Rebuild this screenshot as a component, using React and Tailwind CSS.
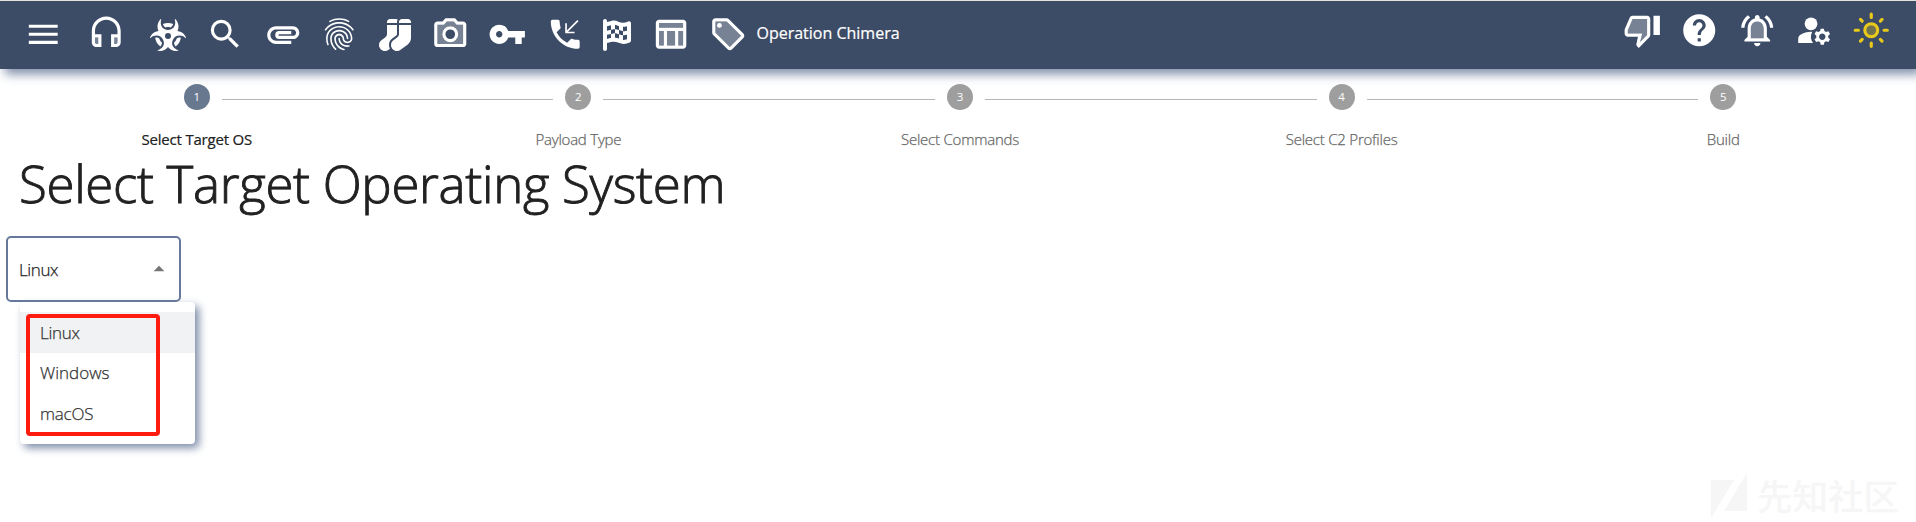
import React from "react";
import {
  MdMenu, MdSearch, MdAttachment, MdFingerprint, MdVpnKey, MdHelp, MdManageAccounts, MdArrowDropUp,
} from "react-icons/md";
import { FaBiohazard, FaSocks, FaFlagCheckered } from "react-icons/fa6";

const ICON = "block h-[38.5px] w-[38.5px] shrink-0";
const FA = "block h-8 w-9 shrink-0";

function TwoTone({ line, tone, children }) {
  return (
    <svg viewBox="0 0 24 24" fill="currentColor" className={ICON}>
      <path opacity=".3" fillRule="evenodd" d={tone} />
      {line && <path d={line} />}
      {children}
    </svg>
  );
}

const Headset = () => (
  <TwoTone
    tone="M5 14v3c0 .55.45 1 1 1h1v-4H5zM17 14v4h1c.55 0 1-.45 1-1v-3h-2z"
    line="M12 1c-4.97 0-9 4.03-9 9v7c0 1.66 1.34 3 3 3h3v-8H5v-2c0-3.87 3.13-7 7-7s7 3.13 7 7v2h-4v8h3c1.66 0 3-1.34 3-3v-7c0-4.97-4.03-9-9-9zM7 14v4H6c-.55 0-1-.45-1-1v-3h2zm12 3c0 .55-.45 1-1 1h-1v-4h2v3z"
  />
);
const Camera = () => (
  <TwoTone
    tone="M15.95 6l-1.83-2H9.88L8.05 6H4v12h16V6h-4.05zM12 17c-2.76 0-5-2.24-5-5s2.24-5 5-5 5 2.24 5 5-2.24 5-5 5z"
    line="M20 4h-3.17L15 2H9L7.17 4H4c-1.1 0-2 .9-2 2v12c0 1.1.9 2 2 2h16c1.1 0 2-.9 2-2V6c0-1.1-.9-2-2-2zm0 14H4V6h4.05l1.83-2h4.24l1.83 2H20v12z"
  >
    <circle cx="12" cy="12" r="4" fill="none" stroke="currentColor" strokeWidth="2" />
  </TwoTone>
);
const PhoneCallback = () => (
  <svg viewBox="0 0 24 24" fill="currentColor" className={ICON}>
    <path d="M20 15.5c-1.25 0-2.45-.2-3.57-.57-.35-.11-.74-.03-1.02.24l-2.2 2.2c-2.83-1.44-5.15-3.75-6.59-6.59l2.2-2.21c.28-.26.36-.65.25-1C8.7 6.45 8.5 5.25 8.5 4c0-.55-.45-1-1-1H4c-.55 0-1 .45-1 1 0 9.39 7.61 17 17 17 .55 0 1-.45 1-1v-3.500c0-.55-.45-1-1-1z" />
    <path d="M12.500 5.200v5.700h5.300M12.700 10.700l7.200-7.200" fill="none" stroke="currentColor" strokeWidth="1.050" />
  </svg>
);
const Table = () => (
  <TwoTone
    tone="M5 5h15v3H5zM10 10h5v9h-5zM5 10h3v9H5zM17 10h3v9h-3z"
    line="M20 3H5c-1.1 0-2 .9-2 2v14c0 1.1.9 2 2 2h15c1.1 0 2-.9 2-2V5c0-1.1-.9-2-2-2zm0 2v3H5V5h15zm-5 14h-5v-9h5v9zM5 10h3v9H5v-9zm12 9v-9h3v9h-3z"
  />
);
const Tag = () => (
  <TwoTone
    tone="M11 4H4v7l9 9.01L20 13l-9-9z"
    line="M21.41 11.58l-9-9C12.05 2.22 11.55 2 11 2H4c-1.1 0-2 .9-2 2v7c0 .55.22 1.05.59 1.42l9 9c.36.36.86.58 1.41.58s1.05-.22 1.41-.59l7-7c.37-.36.59-.86.59-1.41s-.23-1.06-.59-1.42zM13 20.01L4 11V4h7v-.01l9 9-7 7.02z"
  >
    <circle cx="6.5" cy="6.5" r="1.5" />
  </TwoTone>
);
const ThumbDown = () => (
  <TwoTone
    tone="M3 12v2h9l-1.34 5.34L15 15V5H6z"
    line="M15 3H6c-.83 0-1.54.5-1.84 1.22l-3.02 7.05c-.09.23-.14.47-.14.73v2c0 1.1.9 2 2 2h6.31l-.95 4.57-.03.32c0 .41.17.79.44 1.06L9.83 23l6.59-6.59c.36-.36.58-.86.58-1.41V5c0-1.1-.9-2-2-2zm0 12l-4.34 4.34L12 14H3v-2l3-7h9v10zm4-12h4v12h-4V3z"
  />
);
const Bell = () => (
  <TwoTone
    tone="M12 6.5c-2.49 0-4 2.02-4 4.5v6h8v-6c0-2.48-1.51-4.5-4-4.5z"
    line="M12 22c1.1 0 2-.9 2-2h-4c0 1.1.9 2 2 2zm6-6v-5c0-3.07-1.63-5.64-4.5-6.32V4c0-.83-.67-1.5-1.5-1.5s-1.5.67-1.5 1.5v.68C7.64 5.36 6 7.92 6 11v5l-2 2v1h16v-1l-2-2zm-2 1H8v-6c0-2.48 1.51-4.5 4-4.5s4 2.02 4 4.5v6zM7.58 4.08L6.15 2.65C3.75 4.48 2.17 7.3 2.03 10.5h2c.15-2.65 1.51-4.97 3.55-6.42zM19.97 10.5h2c-.15-3.2-1.73-6.02-4.12-7.85l-1.42 1.43c2.02 1.45 3.39 3.77 3.54 6.42z"
  />
);
const Sun = () => (
  <TwoTone tone="M12 9a3 3 0 1 0 0 6a3 3 0 1 0 0-6z">
    <circle cx="12" cy="12" r="4" fill="none" stroke="currentColor" strokeWidth="2" />
    <path
      fill="none" stroke="currentColor" strokeWidth="2" strokeLinecap="round"
      d="M12 2v2M12 20v2M2 12h2M20 12h2M5.28 5.28l1.06 1.06M17.66 17.66l1.06 1.06M5.28 18.72l1.06-1.06M17.66 6.34l1.06-1.06"
    />
  </TwoTone>
);

const LEFT = [
  ["ml-[24.7px]", <MdMenu className={ICON} />],
  ["ml-[25px]", <Headset />],
  ["ml-[23px]", <FaBiohazard className={FA} />],
  ["ml-[19.1px]", <MdSearch className={ICON} />],
  ["ml-[20px]", <MdAttachment className={ICON} />],
  ["ml-[18.9px]", <MdFingerprint className={ICON} />],
  ["ml-[17.6px]", <FaSocks className={FA} />],
  ["ml-[16.6px]", <Camera />],
  ["ml-[19.1px]", <MdVpnKey className={ICON} />],
  ["ml-[20px]", <PhoneCallback />],
  ["ml-[14px]", <FaFlagCheckered className={FA} />],
  ["ml-[15px]", <Table />],
  ["ml-[20px]", <Tag />],
];
const RIGHT = [
  ["text-white", <ThumbDown />],
  ["text-white", <MdHelp className={ICON} />],
  ["text-white", <Bell />],
  ["text-white", <MdManageAccounts className={ICON} />],
  ["text-[#e8c91b]", <Sun />],
];
const STEPS = ["Select Target OS", "Payload Type", "Select Commands", "Select C2 Profiles", "Build"];

function TopBar() {
  return (
    <header className="flex h-[68px] justify-between bg-[#3d4c66] text-white shadow-[5px_5px_10px_#7d8ca8]">
      <div className="flex h-[67px] items-center">
        {LEFT.map(([pos, icon], i) => (
          <button key={i} className={`flex w-[38px] shrink-0 justify-center ${pos}`}>{icon}</button>
        ))}
        <span className="mb-[3px] ml-[9.5px] whitespace-nowrap text-[16px] [-webkit-text-stroke:0.2px]">Operation Chimera</span>
      </div>
      <div className="flex h-[58px] items-center gap-[19.4px] pr-[25.4px]">
        {RIGHT.map(([tone, icon], i) => (
          <button key={i} className={`flex w-[38px] shrink-0 justify-center ${tone}`}>{icon}</button>
        ))}
      </div>
    </header>
  );
}

function Stepper() {
  return (
    <ol className="grid h-[80px] grid-cols-5 pl-[6px] pr-[2px] pt-[15px]">
      {STEPS.map((label, i) => (
        <li key={label} className="flex flex-col items-center">
          <div className="flex h-[26px] w-full items-start">
            <span className={`mt-[15px] h-px flex-1 ${i ? "bg-[#b5b5b5]" : ""}`} />
            <span className={`mx-[12px] flex h-[26px] w-[26px] items-center justify-center rounded-full text-[11.5px] text-white ${i ? "bg-[#9e9e9e]" : "bg-[#67788f]"}`}>
              {i + 1}
            </span>
            <span className={`mt-[15px] h-px flex-1 ${i < 4 ? "bg-[#b5b5b5]" : ""}`} />
          </div>
          <span className={`mt-[19px] text-[15px] leading-[20px] ${i ? "font-light tracking-[-0.22px] text-[#666] [-webkit-text-stroke:0.25px]" : "tracking-[-0.2px] text-[#212121] [-webkit-text-stroke:0.2px]"}`}>
            {label}
          </span>
        </li>
      ))}
    </ol>
  );
}

function OsSelect() {
  return (
    <div className="relative ml-[6px] h-[66px] w-[175px]">
      <div className="flex h-full items-center justify-between rounded-[5px] border-2 border-[#67799a] pl-[11px] pr-[7px] text-[17px] font-light tracking-[-0.4px] text-[#212121] [-webkit-text-stroke:0.25px]">
        <span className="mt-[2px]">Linux</span>
        <MdArrowDropUp className="h-[26px] w-[26px] text-[#757575]" />
      </div>
      <ul className="absolute left-[14px] top-[66px] h-[142px] w-[175px] rounded-[4px] bg-white pt-[10px] text-[17px] font-light text-[#333] shadow-[4px_4px_8px_#7d8ca8] [-webkit-text-stroke:0.25px]">
        <li className="flex h-[41px] items-center bg-[#f1f2f4] pl-[20px] pt-px tracking-[-0.3px]">Linux</li>
        <li className="flex h-[40px] items-center pl-[20px]">Windows</li>
        <li className="flex h-[41px] items-center pl-[20px] pt-px tracking-[-0.2px]">macOS</li>
      </ul>
      <div className="absolute left-[20px] top-[78px] h-[122px] w-[134px] rounded-[4px] border-4 border-[#ff1b0e]" />
    </div>
  );
}

function Watermark() {
  return (
    <footer className="mt-auto flex h-[54px] items-start justify-end gap-[10px] pr-[17px] text-[#f6f6f6]">
      <svg viewBox="0 0 36 46" fill="currentColor" className="mt-[5px] h-[46px] w-[36px]">
        <path d="M0 7h23L0 45zM36 0v38H13z" />
      </svg>
      <span className="font-['Noto_Sans_CJK_SC',sans-serif] text-[35.5px] leading-[54px] font-medium">先知社区</span>
    </footer>
  );
}

export default function App() {
  return (
    <div className="flex h-[522px] w-[1916px] flex-col overflow-hidden border-t border-[#dfe3da] bg-white font-['Open_Sans','Noto_Sans',sans-serif]">
      <TopBar />
      <Stepper />
      <h1 className="-mt-px mb-[18px] ml-[19px] h-[70px] whitespace-nowrap text-[51px] leading-[70px] font-light tracking-[-0.33px] text-[#212121] [-webkit-text-stroke:0.9px]">
        Select Target Operating System
      </h1>
      <OsSelect />
      <Watermark />
    </div>
  );
}
